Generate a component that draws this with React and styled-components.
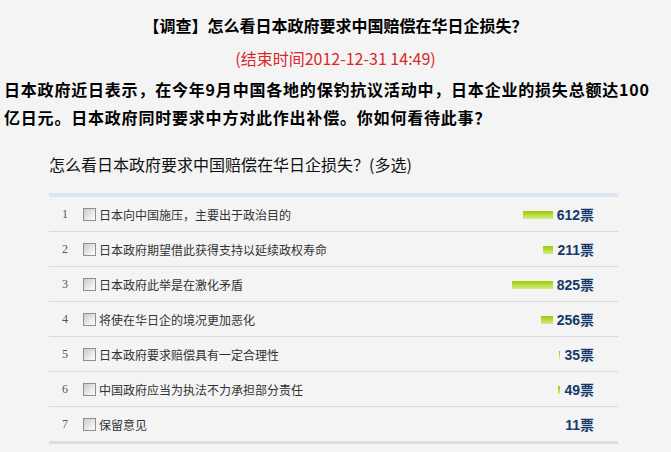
import React from "react";
import styled, { createGlobalStyle } from "styled-components";

const GlobalStyle = createGlobalStyle`
  body {
    margin: 0;
    background: #f4f4f4;
    font-family: "Noto Sans CJK SC", "Noto Sans", sans-serif;
  }
`;

const OPTIONS = [
  { id: 1, text: "日本向中国施压，主要出于政治目的", votes: 612 },
  { id: 2, text: "日本政府期望借此获得支持以延续政权寿命", votes: 211 },
  { id: 3, text: "日本政府此举是在激化矛盾", votes: 825 },
  { id: 4, text: "将使在华日企的境况更加恶化", votes: 256 },
  { id: 5, text: "日本政府要求赔偿具有一定合理性", votes: 35 },
  { id: 6, text: "中国政府应当为执法不力承担部分责任", votes: 49 },
  { id: 7, text: "保留意见", votes: 11 },
];

const TOTAL = OPTIONS.reduce((sum, o) => sum + o.votes, 0);

function App() {
  return (
    <Page>
      <GlobalStyle />
      <Title>【调查】怎么看日本政府要求中国赔偿在华日企损失？</Title>
      <EndTime>(结束时间2012-12-31 14:49)</EndTime>
      <Intro>
        日本政府近日表示，在今年9月中国各地的保钓抗议活动中，日本企业的损失总额达100亿日元。日本政府同时要求中方对此作出补偿。你如何看待此事？
      </Intro>
      <Question>怎么看日本政府要求中国赔偿在华日企损失？(多选)</Question>
      <VoteTable>
        {OPTIONS.map((o) => (
          <Row key={o.id}>
            <Num>{o.id}</Num>
            <Check type="checkbox" />
            <OptionText>{o.text}</OptionText>
            <Result>
              <Bar style={{ width: Math.floor((o.votes / TOTAL) * 100) }} />
              <Count>{o.votes}票</Count>
            </Result>
          </Row>
        ))}
      </VoteTable>
    </Page>
  );
}

const Page = styled.div`
  padding-top: 12px;
  color: #111;
`;

const Title = styled.h1`
  margin: 0;
  font-size: 16px;
  line-height: 26px;
  font-weight: bold;
  text-align: center;
  color: #000;
`;

const EndTime = styled.div`
  margin-top: 7px;
  font-size: 16px;
  line-height: 26px;
  text-align: center;
  color: #d7282a;
`;

const Intro = styled.p`
  margin: 4px 0 0;
  padding: 0 12px 0 4px;
  font-size: 16px;
  line-height: 28px;
  font-weight: bold;
  letter-spacing: 0.8px;
  color: #000;
`;

const Question = styled.div`
  margin: 21px 0 0 49px;
  font-size: 16px;
  line-height: 24px;
  color: #111;
`;

const VoteTable = styled.div`
  margin: 17px 53px 0 49px;
  border-top: 4px solid #dde6f0;
  border-bottom: 3px solid #dddddd;
`;

const Row = styled.div`
  display: flex;
  align-items: center;
  height: 34px;
  padding: 0 24px 0 13px;
  border-bottom: 1px solid #dadada;

  &:last-child {
    border-bottom: none;
  }
`;

const Num = styled.span`
  width: 21px;
  font-size: 12px;
  color: #555;
  font-family: "Liberation Serif", "Noto Sans CJK SC", serif;
`;

const Check = styled.input`
  appearance: none;
  margin: 0;
  width: 13px;
  height: 13px;
  box-sizing: border-box;
  border: 1px solid #8e8f8f;
  background: linear-gradient(135deg, #c9c9c9 0%, #f0f0f0 70%, #ffffff 100%);
`;

const OptionText = styled.span`
  margin-left: 3px;
  font-size: 12px;
  color: #333;
`;

const Result = styled.div`
  margin-left: auto;
  display: flex;
  align-items: center;
  gap: 4px;
`;

const Bar = styled.span`
  display: block;
  height: 8px;
  margin-top: 2px;
  background: linear-gradient(#9acb00, #d4ec88);
`;

const Count = styled.span`
  font-family: "Liberation Sans", "Noto Sans CJK SC", sans-serif;
  font-size: 14px;
  font-weight: bold;
  color: #15396a;
`;

export default App;
